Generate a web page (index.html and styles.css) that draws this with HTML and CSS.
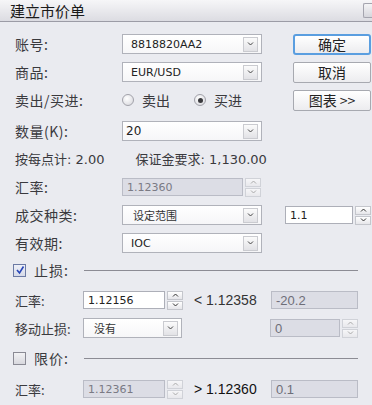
FILE: index.html
```html
<!DOCTYPE html>
<html lang="zh">
<head>
    <meta charset="UTF-8">
    <meta name="viewport" content="width=device-width, initial-scale=1.0">
    <title>建立市价单</title>
    <link rel="stylesheet" href="styles.css">
</head>
<body>
    <div class="titlebar">
        <span class="title">建立市价单</span>
        <span class="close"></span>
    </div>
    <div class="dlg">
        <div class="row">
            <span class="lbl">账号:</span>
            <div class="sel w140"><span class="val">8818820AA2</span><span class="drop"><svg width="7" height="4"><polyline points="1,0.5 3.5,3 6,0.5" fill="none" stroke="#444" stroke-width="1"/></svg></span></div>
            <button class="btn focus">确定</button>
        </div>
        <div class="row">
            <span class="lbl">商品:</span>
            <div class="sel w140"><span class="val">EUR/USD</span><span class="drop"><svg width="7" height="4"><polyline points="1,0.5 3.5,3 6,0.5" fill="none" stroke="#444" stroke-width="1"/></svg></span></div>
            <button class="btn">取消</button>
        </div>
        <div class="row">
            <span class="lbl">卖出/买进:</span>
            <span class="radio"></span><span class="rtxt">卖出</span>
            <span class="radio on"></span><span class="rtxt">买进</span>
            <button class="btn">图表 &gt;&gt;</button>
        </div>
        <div class="row m11">
            <span class="lbl">数量(K):</span>
            <div class="sel w140"><span class="val edit">20</span><span class="drop"><svg width="7" height="4"><polyline points="1,0.5 3.5,3 6,0.5" fill="none" stroke="#444" stroke-width="1"/></svg></span></div>
        </div>
        <div class="row m7 info">
            <span>按每点计: 2.00</span>
            <span class="info2">保证金要求: 1,130.00</span>
        </div>
        <div class="row m9">
            <span class="lbl">汇率:</span>
            <div class="inp off w121">1.12360</div>
            <div class="spin off"><span><svg width="7" height="4"><polyline points="1,3.5 3.5,1 6,3.5" fill="none" stroke="#aaa"/></svg></span><span><svg width="7" height="4"><polyline points="1,0.5 3.5,3 6,0.5" fill="none" stroke="#aaa"/></svg></span></div>
        </div>
        <div class="row">
            <span class="lbl">成交种类:</span>
            <div class="sel w140"><span class="val small">设定范围</span><span class="drop"><svg width="7" height="4"><polyline points="1,0.5 3.5,3 6,0.5" fill="none" stroke="#444" stroke-width="1"/></svg></span></div>
            <div class="inp w68 ml23">1.1</div>
            <div class="spin"><span><svg width="7" height="4"><polyline points="1,3.5 3.5,1 6,3.5" fill="none" stroke="#333"/></svg></span><span><svg width="7" height="4"><polyline points="1,0.5 3.5,3 6,0.5" fill="none" stroke="#333"/></svg></span></div>
        </div>
        <div class="row">
            <span class="lbl">有效期:</span>
            <div class="sel w140"><span class="val">IOC</span><span class="drop"><svg width="7" height="4"><polyline points="1,0.5 3.5,3 6,0.5" fill="none" stroke="#444" stroke-width="1"/></svg></span></div>
        </div>

        <div class="row m7 low">
            <span class="chk on"><svg width="10" height="10"><polyline points="2,5 4.5,8 8.5,1.5" fill="none" stroke="#2846b8" stroke-width="1.6"/></svg></span>
            <span class="ctxt">止损:</span>
            <span class="line"></span>
        </div>
        <div class="row m10 low">
            <span class="lbl s">汇率:</span>
            <div class="inp w82">1.12156</div>
            <div class="spin"><span><svg width="7" height="4"><polyline points="1,3.5 3.5,1 6,3.5" fill="none" stroke="#333"/></svg></span><span><svg width="7" height="4"><polyline points="1,0.5 3.5,3 6,0.5" fill="none" stroke="#333"/></svg></span></div>
            <span class="cmp">&lt; 1.12358</span>
            <div class="inp off w87 right big">-20.2</div>
        </div>
        <div class="row low">
            <span class="lbl s">移动止损:</span>
            <div class="sel w99"><span class="val small">没有</span><span class="drop"><svg width="7" height="4"><polyline points="1,0.5 3.5,3 6,0.5" fill="none" stroke="#444" stroke-width="1"/></svg></span></div>
            <div class="inp off w70 right big">0</div>
            <div class="spin off"><span><svg width="7" height="4"><polyline points="1,3.5 3.5,1 6,3.5" fill="none" stroke="#aaa"/></svg></span><span><svg width="7" height="4"><polyline points="1,0.5 3.5,3 6,0.5" fill="none" stroke="#aaa"/></svg></span></div>
        </div>
        <div class="row m10 low">
            <span class="chk"></span>
            <span class="ctxt">限价:</span>
            <span class="line"></span>
        </div>
        <div class="row m11 low">
            <span class="lbl s">汇率:</span>
            <div class="inp off w82">1.12361</div>
            <div class="spin off"><span><svg width="7" height="4"><polyline points="1,3.5 3.5,1 6,3.5" fill="none" stroke="#aaa"/></svg></span><span><svg width="7" height="4"><polyline points="1,0.5 3.5,3 6,0.5" fill="none" stroke="#aaa"/></svg></span></div>
            <span class="cmp dark">&gt; 1.12360</span>
            <div class="inp off w87 right big">0.1</div>
        </div>
    </div>
</body>
</html>
```

FILE: styles.css
```css
body {
    margin: 0;
    width: 372px;
    height: 405px;
    background-color: #eaebf0;
    font-family: "Noto Sans CJK SC", "DejaVu Sans", sans-serif;
    color: #3a3a3e;
    overflow: hidden;
}
.titlebar {
    height: 21px;
    border-bottom: 1px solid #9c9ca6;
    background: linear-gradient(#f6f6f8, #dcdce2);
    display: flex;
    align-items: center;
}
.title {
    padding-left: 10px;
    font-size: 15px;
    color: #1a1a1a;
    line-height: 20px;
}
.close {
    margin-left: auto;
    width: 8px;
    height: 13px;
    border: 1px solid #a4a4ae;
    border-right: none;
    border-radius: 2px 0 0 2px;
    background: linear-gradient(#f4f4f6, #d6d6dc);
}
.dlg {
    padding: 12px 0 0 15px;
    display: flex;
    flex-direction: column;
}
.row {
    display: flex;
    align-items: center;
    height: 20px;
    margin-top: 8px;
}
.row:first-child { margin-top: 0; }
.m7 { margin-top: 7px; }
.m9 { margin-top: 9px; }
.m10 { margin-top: 10px; }
.m11 { margin-top: 11px; }
.low {
    margin-right: 14px;
}
.lbl {
    width: 107px;
    flex-shrink: 0;
    font-size: 14px;
    letter-spacing: 0.5px;
}
.lbl.s {
    width: 68px;
    font-size: 13px;
    letter-spacing: 0;
}
.sel {
    height: 18px;
    border: 1px solid #b0b2ba;
    background: linear-gradient(#ffffff, #f6f6f8);
    display: flex;
    align-items: center;
    box-sizing: content-box;
}
.w140 { width: 138px; }
.w99 { width: 97px; }
.val {
    padding-left: 8px;
    font-family: "DejaVu Sans", sans-serif;
    font-size: 11px;
    color: #222;
}
.val.edit {
    padding-left: 3px;
    font-size: 12px;
}
.val.small {
    padding-left: 10px;
    font-family: "Noto Sans CJK SC", sans-serif;
    font-size: 11px;
    color: #333;
}
.drop {
    margin-left: auto;
    margin-right: 3px;
    width: 13px;
    height: 13px;
    border: 1px solid #cacbd0;
    background: linear-gradient(#fbfbfb, #e2e2e6);
    display: flex;
    align-items: center;
    justify-content: center;
}
.btn {
    margin-left: auto;
    width: 78px;
    height: 21px;
    margin-right: 1px;
    border: 1px solid #a7a9b0;
    border-radius: 2px;
    background: linear-gradient(#ffffff, #ececef);
    font-family: "Noto Sans CJK SC", sans-serif;
    font-size: 14px;
    color: #222;
    padding: 0;
    line-height: 18px;
}
.btn.focus {
    border: 2px solid #5a9ee0;
    border-radius: 3px;
    line-height: 16px;
}
.radio {
    width: 10px;
    height: 10px;
    border: 1px solid #a2a2aa;
    border-radius: 50%;
    background: radial-gradient(circle at 40% 35%, #ffffff, #d4d4da);
    display: flex;
    align-items: center;
    justify-content: center;
}
.radio.on::after {
    content: "";
    width: 5px;
    height: 5px;
    border-radius: 50%;
    background: #3a3a3e;
}
.rtxt {
    font-size: 14px;
    margin-left: 8px;
    margin-right: 24px;
}
.info {
    font-family: "DejaVu Sans", "Noto Sans CJK SC", sans-serif;
}
.info span {
    font-size: 13px;
}
.info .info2 {
    margin-left: 31px;
}
.inp {
    border: 1px solid #adafb8;
    background: #fff;
    font-family: "DejaVu Sans", sans-serif;
    font-size: 11px;
    color: #222;
    padding-left: 4px;
    display: flex;
    align-items: center;
    box-sizing: border-box;
    height: 18px;
}
.inp.off {
    background: #dcdde5;
    border-color: #babcc6;
    color: #7a7a84;
}
.inp.big {
    font-size: 13px;
    font-family: "Liberation Sans", sans-serif;
    color: #6e6e78;
}
.w121 { width: 121px; }
.w68 { width: 68px; }
.w82 { width: 82px; }
.w87 { width: 87px; }
.w70 { width: 70px; }
.ml23 { margin-left: 23px; }
.right { margin-left: auto; }
.spin {
    margin-left: 2px;
    width: 16px;
    height: 19px;
    display: flex;
    flex-direction: column;
    gap: 1px;
}
.spin span {
    flex: 1;
    border: 1px solid #c4c6cc;
    background: linear-gradient(#ffffff, #e6e6ea);
    display: flex;
    align-items: center;
    justify-content: center;
}
.spin.off span {
    border-color: #d0d2d8;
    background: linear-gradient(#f6f6f8, #e8e8ec);
}
.cmp {
    margin-left: 11px;
    font-family: "Liberation Sans", sans-serif;
    font-size: 14px;
    color: #333;
}
.cmp.dark { color: #111; }
.chk {
    margin-left: -2px;
    width: 11px;
    height: 11px;
    border: 1px solid #8a8a94;
    background: linear-gradient(#f2f2f4, #d8d8de);
    display: flex;
    align-items: center;
    justify-content: center;
}
.chk.on {
    border-color: #6c7aa4;
    background: linear-gradient(#eef0f8, #d6dae8);
}
.ctxt {
    margin-left: 8px;
    width: 50px;
    font-size: 14px;
    letter-spacing: 1px;
}
.line {
    flex: 1;
    height: 1px;
    background: #8c8c94;
}
```
